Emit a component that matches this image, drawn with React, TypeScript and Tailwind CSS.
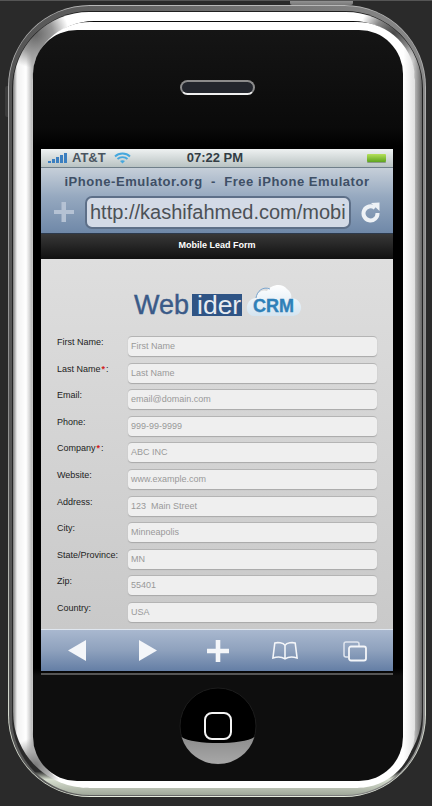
import React from "react";

const fields = [
  ["First Name:", "", "First Name"],
  ["Last Name", "*", "Last Name"],
  ["Email:", "", "email@domain.com"],
  ["Phone:", "", "999-99-9999"],
  ["Company", "*", "ABC INC"],
  ["Website:", "", "www.example.com"],
  ["Address:", "", "123  Main Street"],
  ["City:", "", "Minneapolis"],
  ["State/Province:", "", "MN"],
  ["Zip:", "", "55401"],
  ["Country:", "", "USA"],
  ["", "", ""],
];

function Logo() {
  return (
    <div className="flex items-start h-[36px] pl-[93px]">
      <span className="w-[58px] text-[27px] leading-[36px] text-[#3a5a88] mt-[4px] [-webkit-text-stroke:0.4px_#3a5a88]">Web</span>
      <span className="w-[50px] text-[26.5px] leading-[22px] h-[22px] pl-[5px] mt-[11px] bg-[#2f5485] text-[#e8ecf2]">ider</span>
      <svg width="56" height="34" viewBox="0 0 56 34" className="ml-[4px]">
        <defs>
          <linearGradient id="cl" x1="0" y1="0" x2="0" y2="1">
            <stop offset="0" stopColor="#ffffff" />
            <stop offset="1" stopColor="#d4e4f0" />
          </linearGradient>
        </defs>
        <path d="M9 33 C3 33 0 28 1 23 C2 18 6 15 10 15 C11 9 17 6 21 8 C24 2 36 -1 41 6 C45 9 46 13 45 15 C51 15 56 20 55 26 C54 31 50 33 46 33 Z" fill="url(#cl)" />
        <path d="M10 15 C11 8 17 3 24 6" fill="none" stroke="#7aa5cf" strokeWidth="1" />
        <text x="7" y="29" fontFamily="Liberation Sans" fontWeight="700" fontSize="19" fill="#2f80b8" stroke="#2f80b8" strokeWidth="0.4" textLength="41" lengthAdjust="spacingAndGlyphs">CRM</text>
      </svg>
    </div>
  );
}

function Field({ label, req, value }: { label: string; req: string; value: string }) {
  return (
    <div className="flex h-[26.6px] shrink-0">
      <div className="w-[87px] pl-[16px] pt-[2px] text-[9px] leading-[13px] text-[#222] whitespace-nowrap">
        {label}
        {req && <span className="mx-[1px] text-[#d02020] font-bold">{req}</span>}
        {req && ":"}
      </div>
      <div className="w-[249px] h-[20px] mt-[2px] rounded-[4px] bg-[#efefef] border-t border-[#b4b4b4] shadow-[0_1px_1px_#a8a8a8] pl-[3px] text-[9px] leading-[18px] text-[#999] whitespace-pre">
        {value}
      </div>
    </div>
  );
}

function StatusBar() {
  return (
    <div className="h-[19px] shrink-0 flex items-center bg-[linear-gradient(180deg,#eef1f1,#b9c3c3)] border-b border-[#6f7f8a]">
      <svg width="22" height="11" viewBox="0 0 22 11" className="ml-[7px]">
        <rect x="0" y="8" width="3" height="2" fill="#3b7fc0" />
        <rect x="4" y="6" width="3" height="4" fill="#3b7fc0" />
        <rect x="8" y="4" width="3" height="6" fill="#3b7fc0" />
        <rect x="12" y="2" width="3" height="8" fill="#3b7fc0" />
        <rect x="16" y="0" width="3" height="10" fill="#3b7fc0" />
      </svg>
      <span className="ml-[2px] text-[13px] font-bold text-[#4a5560]">AT&amp;T</span>
      <svg width="17" height="12" viewBox="0 0 17 12" className="ml-[8px]">
        <path d="M1 4.5 C5 0.5 12 0.5 16 4.5 M3.5 7 C6 4.5 11 4.5 13.5 7" fill="none" stroke="#46a8de" strokeWidth="1.8" />
        <path d="M6 9 C7.5 8 9.5 8 11 9 L8.5 11.5 Z" fill="#46a8de" />
      </svg>
      <span className="ml-[56px] text-[13px] font-bold text-[#333d44]">07:22 PM</span>
      <div className="ml-auto mr-[7px] w-[19px] h-[8px] rounded-[1px] bg-[linear-gradient(180deg,#b5e05a,#5fa51e)] shadow-[0_1px_0_#8a9a8a]" />
    </div>
  );
}

function BrowserBar() {
  return (
    <div className="h-[66px] shrink-0 bg-[linear-gradient(180deg,#c6cfd9,#95a8bf_45%,#6f88a8)] border-b border-[#2d3a4c]">
      <div className="h-[27px] text-center text-[13px] font-bold leading-[28px] text-[#3e4f66] tracking-[0.55px] whitespace-pre">
        iPhone-Emulator.org  -  Free iPhone Emulator
      </div>
      <div className="flex items-center h-[34px]">
        <svg width="24" height="24" viewBox="0 0 24 24" className="ml-[11px]">
          <path d="M9.5 2 H14 V10 H22 V14 H14 V22 H9.5 V14 H2 V10 H9.5 Z" fill="#b5c2d4" />
        </svg>
        <div className="ml-[9px] w-[266px] h-[33px] rounded-[7px] bg-[#d3dae6] border-2 border-[#5d6f88] overflow-hidden whitespace-nowrap pl-[3px] text-[20px] leading-[29px] text-[#4c5156]">
          http://kashifahmed.com/mobi
        </div>
        <svg width="22" height="22" viewBox="0 0 22 22" className="ml-[9px]">
          <path d="M15 7 A7 7 0 1 0 17.5 12" fill="none" stroke="#eef2f6" strokeWidth="4" />
          <path d="M11 2 L19.5 1.5 L19.5 10 Z" fill="#eef2f6" />
        </svg>
      </div>
    </div>
  );
}

function Toolbar() {
  return (
    <div className="h-[42px] shrink-0 flex items-center bg-[linear-gradient(180deg,#a9b8cf,#8ea1bd_50%,#647ea5)] border-t border-[#dfe6ef]">
      <svg width="18" height="22" viewBox="0 0 18 22" className="ml-[27px]">
        <path d="M18 0 V21 L0 10.5 Z" fill="#f4f6f9" />
      </svg>
      <svg width="18" height="22" viewBox="0 0 18 22" className="ml-[53px]">
        <path d="M0 0 V21 L18 10.5 Z" fill="#f4f6f9" />
      </svg>
      <svg width="22" height="22" viewBox="0 0 22 22" className="ml-[50px]">
        <path d="M8.7 0 H13.3 V8.7 H22 V13.3 H13.3 V22 H8.7 V13.3 H0 V8.7 H8.7 Z" fill="#f4f6f9" />
      </svg>
      <svg width="26" height="21" viewBox="0 0 28 21" className="ml-[43px]">
        <path d="M14 5 C12 2 6 1.5 3 2.5 L1 18.5 C6 17 11 17.5 14 19.5 C17 17.5 22 17 27 18.5 L25 2.5 C22 1.5 16 2 14 5 Z M14 5 V19.5" fill="none" stroke="#f4f6f9" strokeWidth="1.7" />
      </svg>
      <svg width="24" height="22" viewBox="0 0 24 22" className="ml-[45px]">
        <path d="M5 17 H3 A2 2 0 0 1 1 15 V4 A2 2 0 0 1 3 2 H14 A2 2 0 0 1 16 4 V6" fill="none" stroke="#dfe5ee" strokeWidth="1.5" />
        <rect x="6" y="6.5" width="17" height="14" rx="2" fill="none" stroke="#f4f6f9" strokeWidth="1.8" />
      </svg>
    </div>
  );
}

function HomeButton() {
  return (
    <svg width="78" height="78" viewBox="0 0 78 78" className="mx-auto block">
      <defs>
        <linearGradient id="hb" x1="0" y1="0" x2="0" y2="1">
          <stop offset="0" stopColor="#8c8c8c" />
          <stop offset="1" stopColor="#a8a8a8" />
        </linearGradient>
      </defs>
      <circle cx="39" cy="39" r="38" fill="#000" stroke="#1c1c1c" />
      <path d="M2.6 50 C14 58 64 58 75.4 50 A38 38 0 0 1 2.6 50 Z" fill="url(#hb)" />
      <rect x="26" y="26" width="26" height="26" rx="7" fill="none" stroke="#f4f4f4" strokeWidth="2" />
    </svg>
  );
}

export default function App() {
  return (
    <div className="relative w-[432px] h-[806px] overflow-hidden bg-[#2a2a2a] font-['Liberation_Sans',Arial,sans-serif] pt-[4px] pl-[8px] border-t-[1px] border-[#555]">
      <div className="absolute left-[290px] top-[-1px] w-[63px] h-[5px] bg-[linear-gradient(180deg,#999,#777)] rounded-b-[2px]" />
      <div className="absolute left-[5px] top-[85px] w-[3px] h-[31px] bg-[#3c3c3c] rounded-l-[2px]" />
      <div className="w-[418px] h-[792px] rounded-[82px] bg-[linear-gradient(180deg,#b8b8b8,#8a8a8a_50%,#e8eee0)] p-[1px]">
        <div className="h-full rounded-[80px] bg-[linear-gradient(90deg,#555,#888_100%)] pt-[5px] pl-[3px] pr-[2px] pb-[1px]">
          <div className="h-full rounded-[78px] bg-[linear-gradient(180deg,#1f1f1f,#2a2a2a_97%,#d8dfd0_98%,#a0a89a)] pt-[1px] pl-[1px] pr-[1px] pb-[0px]">
            <div className="h-[776px] rounded-[76px] bg-[radial-gradient(circle_at_22px_22px,#666_0,#999_18px,transparent_34px),radial-gradient(circle_at_380px_22px,#444_0,#888_18px,transparent_34px),radial-gradient(circle_at_22px_754px,#777_0,#aaa_14px,transparent_28px),radial-gradient(circle_at_380px_754px,#777_0,#aaa_14px,transparent_28px),linear-gradient(90deg,#7a7a7a,#f0f0f0_1%,#ffffff_3.2%,#b8b8b8_4.7%,#ffffff_10%,#ffffff_90%,#f0f0f0_97%,#666)] pt-[9px] pl-[19px] pr-[7px]">
              <div className="h-[767px] rounded-[62px] bg-[#0a0a0a] pt-[1px]">
                <div className="h-[766px] rounded-[58px] bg-[linear-gradient(90deg,#bbbbbb,#ffffff_1%,#ffffff_97%,#e0e0e0)] pt-[8px] pl-[1px] pr-[12px]">
                  <div className="h-[751px] rounded-[44px] bg-[linear-gradient(180deg,#151515,#0a0a0a_13%,#000_15.5%,#000_85%,#0e0e0e_86%,#0e0e0e)] pt-[119px]">
                    <div className="relative w-[370px] h-0">
                      <div className="absolute left-[147px] -top-[69px] w-[75px] h-[15px] rounded-full bg-[#23262d] border-[2px] border-[#8b8b8b] border-b-[#f0f0f0]" />
                    </div>
                    <div className="mx-[8px] w-[352px] h-[522px] overflow-hidden flex flex-col bg-black">
                      <StatusBar />
                      <BrowserBar />
                      <div className="h-[25px] shrink-0 flex items-center justify-center bg-[linear-gradient(180deg,#383838,#101010)] text-white text-[9px] font-bold pb-[1px]">
                        Mobile Lead Form
                      </div>
                      <div className="flex-1 min-h-0 overflow-hidden bg-[linear-gradient(180deg,#dedede,#c9c9c9)] pt-[24px]">
                        <Logo />
                        <div className="mt-[15px] flex flex-col">
                          {fields.map(([l, r, v], i) => (
                            <Field key={i} label={l} req={r} value={v} />
                          ))}
                        </div>
                      </div>
                      <Toolbar />
                    </div>
                    <div className="mx-[8px] mt-[2px] w-[352px] h-[2px] bg-[#555]" />
                    <div className="mt-[12px]">
                      <HomeButton />
                    </div>
                  </div>
                </div>
              </div>
            </div>
          </div>
        </div>
      </div>
    </div>
  );
}
